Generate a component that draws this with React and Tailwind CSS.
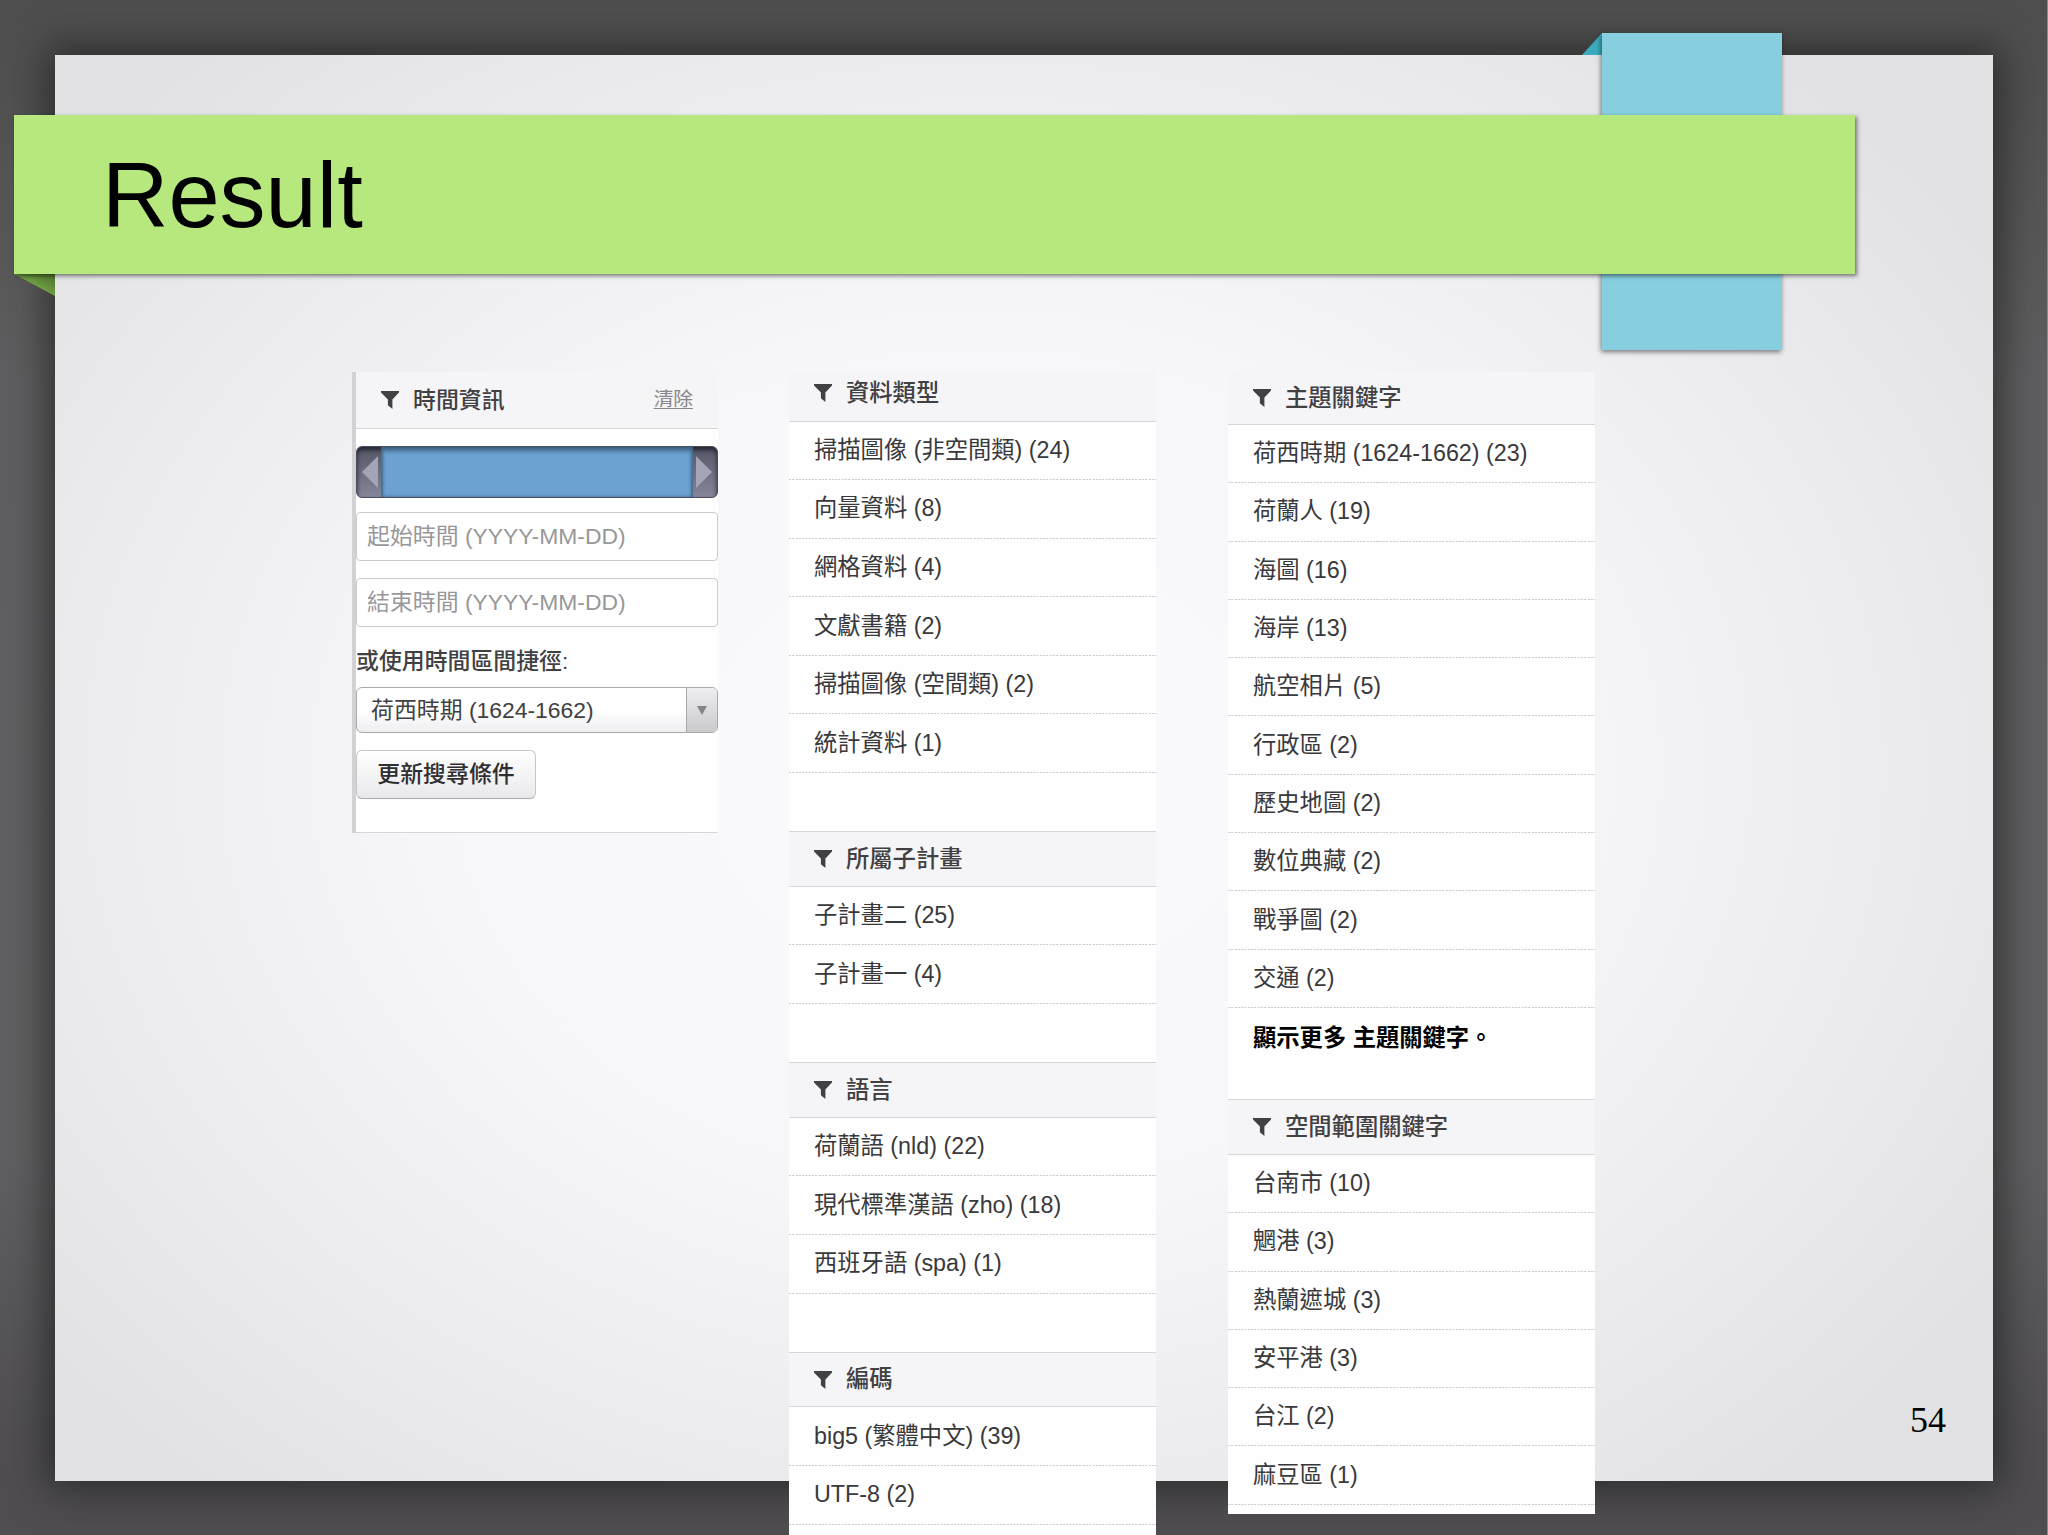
import clsx from 'clsx'

const typeGroups = [
  {
    title: '資料類型',
    items: ['掃描圖像 (非空間類) (24)', '向量資料 (8)', '網格資料 (4)', '文獻書籍 (2)', '掃描圖像 (空間類) (2)', '統計資料 (1)'],
  },
  { title: '所屬子計畫', items: ['子計畫二 (25)', '子計畫一 (4)'] },
  { title: '語言', items: ['荷蘭語 (nld) (22)', '現代標準漢語 (zho) (18)', '西班牙語 (spa) (1)'] },
  { title: '編碼', items: ['big5 (繁體中文) (39)', 'UTF-8 (2)'] },
]

const keywords = [
  '荷西時期 (1624-1662) (23)',
  '荷蘭人 (19)',
  '海圖 (16)',
  '海岸 (13)',
  '航空相片 (5)',
  '行政區 (2)',
  '歷史地圖 (2)',
  '數位典藏 (2)',
  '戰爭圖 (2)',
  '交通 (2)',
]

const places = ['台南市 (10)', '魍港 (3)', '熱蘭遮城 (3)', '安平港 (3)', '台江 (2)', '麻豆區 (1)']

function FilterIcon() {
  return (
    <svg width="18" height="18" viewBox="0 0 18 18" className="shrink-0 fill-[#414043]">
      <path d="M0 0h18v1.4l-6.6 7V18L6.9 14.2V8.4L0 1.4z" />
    </svg>
  )
}

function Heading({ title, className }) {
  return (
    <h2 className={clsx('flex items-center gap-[14px] border-b border-[#d6d5d8] bg-[#f5f4f7] pl-[25px] font-medium text-[#414043]', className)}>
      <FilterIcon />
      <span>{title}</span>
    </h2>
  )
}

function Row({ children, className }) {
  return (
    <li className={clsx('flex flex-col bg-[#fefefe]', className)}>
      <span className="flex flex-1 items-center pl-[25px]">{children}</span>
      <span className="h-px bg-[repeating-linear-gradient(90deg,#cfced2_0px,#cfced2_2px,#f6f5f8_2px,#f6f5f8_3.3px)]" />
    </li>
  )
}

function TimePanel() {
  return (
    <section className="h-[461px] w-[366px] border-l-4 border-[#d2d1d4] bg-[#fefefe] text-[22.9px] text-[#414043]">
      <div className="flex h-[57px] items-center border-b border-[#d6d5d8] bg-[#f5f4f7] pr-[25px] pl-[25px]">
        <FilterIcon />
        <h2 className="ml-[14px] font-medium">時間資訊</h2>
        <a className="ml-auto text-[19.7px] text-[#88878a] underline underline-offset-2">清除</a>
      </div>

      <div className="mt-[17px] flex h-[52px] items-center justify-between overflow-hidden rounded-md border border-[#4b4d5b] bg-gradient-to-b from-[#555766] to-[#85869a] px-[5px] shadow-[inset_0_3px_4px_#23252f]">
        <svg width="16" height="32" viewBox="0 0 16 32" className="fill-[#a3a5b6]">
          <path d="M16 0v32L0 16z" />
        </svg>
        <div className="h-full w-[312px] bg-[#6ba2d2] shadow-[inset_0_4px_4px_#3f6284,inset_2px_0_3px_#4d7496,inset_-2px_0_3px_#4d7496]" />
        <svg width="16" height="32" viewBox="0 0 16 32" className="fill-[#a3a5b6]">
          <path d="M0 0v32l16-16z" />
        </svg>
      </div>

      <div className="mt-[14px] flex h-[49px] items-center rounded border-[1.5px] border-[#cbcacd] bg-white pl-[10px] text-[#98979a]">起始時間 (YYYY-MM-DD)</div>
      <div className="mt-[17px] flex h-[49px] items-center rounded border-[1.5px] border-[#cbcacd] bg-white pl-[10px] text-[#98979a]">結束時間 (YYYY-MM-DD)</div>

      <p className="mt-[17px] h-[34px] leading-[34px] font-medium">或使用時間區間捷徑:</p>

      <div className="mt-[9px] flex h-[46px] overflow-hidden rounded-md border-[1.5px] border-[#a9a8ab] bg-gradient-to-b from-white via-white to-[#eeedf0]">
        <span className="flex flex-1 items-center pl-[14px]">荷西時期 (1624-1662)</span>
        <span className="flex w-[31px] items-center justify-center border-l border-[#a9a8ab] bg-gradient-to-b from-[#eeedf0] to-[#cac9cc]">
          <svg width="10" height="9" viewBox="0 0 10 9" className="fill-[#858487]">
            <path d="M0 0h10L5 9z" />
          </svg>
        </span>
      </div>

      <button className="mt-[17px] flex h-[49px] w-[180px] items-center justify-center rounded-md border-[1.5px] border-[#c6c5c8] border-b-[#aaa9ac] bg-gradient-to-b from-white to-[#e9e8eb] font-medium text-[#2f2e31]">
        更新搜尋條件
      </button>
      <div className="mt-[33px] border-b border-[#d6d5d8]" />
    </section>
  )
}

function TypePanel() {
  return (
    <section className="ml-[71px] w-[367px] text-[23.3px] text-[#39383b]">
      {typeGroups.map((group, i) => (
        <div key={group.title}>
          <Heading title={group.title} className={i === 0 ? 'h-[49.5px] pb-[6px]' : 'h-[55.6px] border-t'} />
          <ul>
            {group.items.map((item) => (
              <Row key={item} className="h-[58.6px]">{item}</Row>
            ))}
          </ul>
          <div className="h-[58.2px] bg-[#fefefe]" />
        </div>
      ))}
    </section>
  )
}

function KeywordPanel() {
  return (
    <section className="ml-[72px] w-[367px] text-[23.3px] text-[#39383b]">
      <Heading title="主題關鍵字" className="h-[53px]" />
      <ul>
        {keywords.map((item) => (
          <Row key={item} className="h-[58.3px]">{item}</Row>
        ))}
      </ul>
      <div className="h-[91px] bg-[#fefefe] pt-[13px] pl-[25px] leading-[34px] font-bold text-black">顯示更多 主題關鍵字。</div>
      <Heading title="空間範圍關鍵字" className="h-[56px] border-t" />
      <ul>
        {places.map((item) => (
          <Row key={item} className="h-[58.3px]">{item}</Row>
        ))}
      </ul>
      <div className="h-[9px] bg-[#fefefe]" />
    </section>
  )
}

export default function App() {
  return (
    <div className="relative flex h-[1535px] w-[2048px] flex-col overflow-hidden border-r border-[#8a898b] bg-[linear-gradient(180deg,#4e4e4e_0%,#525252_8%,#5f5e60_25%,#605f61_75%,#504e51_94%,#4f4d50_100%)] font-['Liberation_Sans','Noto_Sans_CJK_TC',sans-serif]">
      {/* paper sheet and blue ribbon behind the title */}
      <div className="absolute top-[55px] left-[55px] h-[1426px] w-[1938px] bg-[radial-gradient(ellipse_62%_66%_at_48%_50%,#faf9fc_0%,#f7f6f9_45%,#ecebee_75%,#e2e1e3_100%)] shadow-[0_0_36px_8px_rgba(25,25,25,0.65)]" />
      <svg className="absolute top-[33px] left-[1582px]" width="20" height="22" viewBox="0 0 20 22">
        <path d="M20 0v22H0z" fill="#3aabbd" />
      </svg>
      <div className="absolute top-[33px] left-[1602px] h-[317px] w-[180px] bg-[#87cfdf] shadow-[-1px_2px_5px_rgba(0,0,0,0.5)]" />
      <svg className="absolute top-[274px] left-[14px]" width="41" height="22" viewBox="0 0 41 22">
        <defs>
          <linearGradient id="fold" x1="0" y1="1" x2="1" y2="0">
            <stop offset="0.3" stopColor="#7cb447" />
            <stop offset="1" stopColor="#4b6b2d" />
          </linearGradient>
        </defs>
        <path d="M0 0h41v22z" fill="url(#fold)" />
      </svg>

      <header className="relative mt-[115px] ml-[14px] flex h-[159px] w-[1841px] shrink-0 items-center bg-[#b6e87e] pl-[88px] shadow-[2px_2px_4px_rgba(0,0,0,0.5)]">
        <h1 className="text-[92px] leading-none text-black">Result</h1>
      </header>

      <main className="relative flex h-[1261px] items-start pt-[98px] pl-[352px]">
        <TimePanel />
        <TypePanel />
        <KeywordPanel />
        <footer className="mr-[101px] mb-[95px] ml-auto self-end font-['Liberation_Serif',serif] text-[36px] leading-[40px] text-black">54</footer>
      </main>
    </div>
  )
}
